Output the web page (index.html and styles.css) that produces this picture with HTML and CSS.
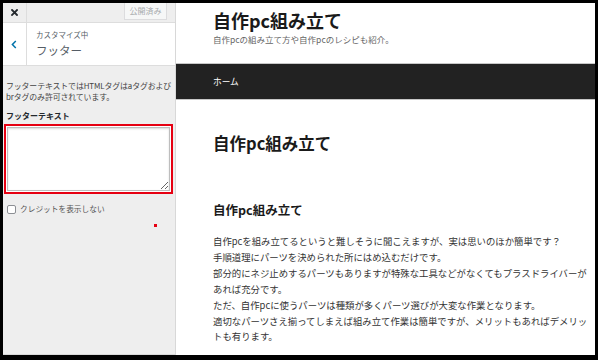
FILE: index.html
```html
<!DOCTYPE html>
<html lang="ja">
<head>
<meta charset="utf-8">
<title>自作pc組み立て</title>
<link rel="stylesheet" href="styles.css">
</head>
<body>
<div class="frame">
  <aside class="sidebar">
    <div class="topbar">
      <div class="close">
        <svg width="7" height="7" viewBox="0 0 7 7"><path d="M1 1L6 6M6 1L1 6" stroke="#23282d" stroke-width="1.8" stroke-linecap="square"/></svg>
      </div>
      <div class="spacer"></div>
      <div class="publish">公開済み</div>
    </div>
    <div class="section-head">
      <div class="back">
        <svg width="6" height="9" viewBox="0 0 6 9"><path d="M4.8 1L1.4 4.5L4.8 8" fill="none" stroke="#0073aa" stroke-width="1.5"/></svg>
      </div>
      <div class="titles">
        <div class="sub">カスタマイズ中</div>
        <div class="name">フッター</div>
      </div>
    </div>
    <div class="panel">
      <p class="desc">フッターテキストではHTMLタグはaタグおよび<br>brタグのみ許可されています。</p>
      <div class="label">フッターテキスト</div>
      <div class="highlight"><textarea class="field"></textarea></div>
      <div class="check"><span class="box"></span><span class="check-label">クレジットを表示しない</span></div>
      <div class="dot"></div>
    </div>
  </aside>
  <main class="main">
    <header class="site-head">
      <div class="site-title">自作pc組み立て</div>
      <div class="site-desc">自作pcの組み立て方や自作pcのレシピも紹介。</div>
    </header>
    <nav class="nav"><span class="nav-item">ホーム</span></nav>
    <div class="content">
      <h1 class="h1">自作pc組み立て</h1>
      <h2 class="h2">自作pc組み立て</h2>
      <p class="text">自作pcを組み立てるというと難しそうに聞こえますが、実は思いのほか簡単です？<br>手順道理にパーツを決められた所にはめ込むだけです。<br>部分的にネジ止めするパーツもありますが特殊な工具などがなくてもプラスドライバーがあれば充分です。<br>ただ、自作pcに使うパーツは種類が多くパーツ選びが大変な作業となります。<br>適切なパーツさえ揃ってしまえば組み立て作業は簡単ですが、メリットもあればデメリットも有ります。</p>
    </div>
  </main>
</div>
</body>
</html>
```

FILE: styles.css
```css
html, body {
  margin: 0;
  padding: 0;
  background: #000;
}
.frame {
  width: 598px;
  height: 360px;
  box-sizing: border-box;
  padding: 3px 3px 5px 3px;
  display: flex;
  font-family: "Noto Sans CJK JP", "Noto Sans", sans-serif;
  overflow: hidden;
}
.sidebar {
  width: 173px;
  flex: none;
  box-sizing: border-box;
  background: #eeeeee;
  border-right: 1px solid #d8d8d8;
  border-bottom: 1px solid #d8d8d8;
  display: flex;
  flex-direction: column;
}
.topbar {
  height: 20px;
  box-sizing: border-box;
  border-bottom: 1px solid #dddddd;
  display: flex;
  align-items: flex-start;
}
.close {
  width: 24px;
  height: 19px;
  box-sizing: border-box;
  border-right: 1px solid #dddddd;
  display: flex;
  justify-content: center;
  padding-top: 6px;
  padding-right: 1px;
}
.spacer { flex: 1; }
.publish {
  width: 43px;
  height: 17px;
  box-sizing: border-box;
  margin-right: 8px;
  background: #f6f7f7;
  border: 1px solid #dcdcde;
  border-top: none;
  color: #a7aaad;
  font-size: 8px;
  line-height: 15px;
  text-align: center;
}
.section-head {
  height: 43px;
  box-sizing: border-box;
  background: #fff;
  border-bottom: 1px solid #dddddd;
  display: flex;
}
.back {
  width: 24px;
  box-sizing: border-box;
  border-right: 1px solid #dddddd;
  display: flex;
  justify-content: center;
  padding-top: 17px;
  padding-right: 1px;
}
.titles {
  padding-left: 9px;
  padding-top: 7px;
  color: #555d66;
}
.sub {
  font-size: 7.5px;
  line-height: 10px;
}
.name {
  font-size: 11.5px;
  line-height: 16px;
  margin-top: 2px;
}
.panel {
  padding: 0 3px;
}
.desc {
  margin: 14px 0 0 0;
  font-size: 7.9px;
  line-height: 11px;
  color: #444;
  white-space: nowrap;
  letter-spacing: -0.1px;
}
.label {
  margin-top: 8px;
  font-size: 8px;
  line-height: 11px;
  font-weight: bold;
  color: #23282d;
}
.highlight {
  margin-top: 3px;
  margin-left: -2px;
  width: 169px;
  height: 70px;
  box-sizing: border-box;
  border: 2px solid #e60012;
  padding: 1px;
  background: #fff;
  display: flex;
}
.field {
  flex: 1;
  margin: 0;
  box-sizing: border-box;
  border: 1px solid #bdbdbd;
  box-shadow: inset 0 1px 2px rgba(0,0,0,0.15);
  background: #fff;
  resize: vertical;
  padding: 0;
  font-family: inherit;
}
.check {
  margin-top: 10px;
  display: flex;
  align-items: center;
  padding-left: 1px;
}
.box {
  width: 9px;
  height: 9px;
  box-sizing: border-box;
  border: 1px solid #8c8f94;
  border-radius: 2px;
  background: #fff;
}
.check-label {
  margin-left: 4px;
  font-size: 7.7px;
  line-height: 10px;
  color: #555;
}
.dot {
  width: 3px;
  height: 3px;
  background: #e60012;
  margin: 10px 0 0 148px;
}
.main {
  flex: 1;
  background: #fff;
  overflow: hidden;
  display: flex;
  flex-direction: column;
}
.site-head {
  height: 61px;
  box-sizing: border-box;
  padding: 6px 0 0 37px;
  border-bottom: 1px solid #c8c8c8;
}
.site-title {
  font-size: 18px;
  line-height: 22px;
  font-weight: bold;
  color: #1a1a1a;
}
.site-desc {
  margin-top: 2px;
  font-size: 8.5px;
  line-height: 12px;
  color: #666;
}
.nav {
  height: 36px;
  box-sizing: border-box;
  background: #222;
  border-bottom: 1px solid #c8c8c8;
  display: flex;
  align-items: center;
  padding-left: 37px;
}
.nav-item {
  color: #fff;
  font-size: 8.7px;
  line-height: 12px;
}
.content {
  padding-left: 37px;
}
.h1 {
  margin: 33px 0 0 0;
  font-size: 16.5px;
  line-height: 20px;
  font-weight: bold;
  color: #1a1a1a;
}
.h2 {
  margin: 49px 0 0 0;
  font-size: 12.5px;
  line-height: 16px;
  font-weight: bold;
  color: #1a1a1a;
}
.text {
  margin: 16px 0 0 0;
  width: 380px;
  font-size: 9.4px;
  line-height: 15.9px;
  color: #333;
}
```
